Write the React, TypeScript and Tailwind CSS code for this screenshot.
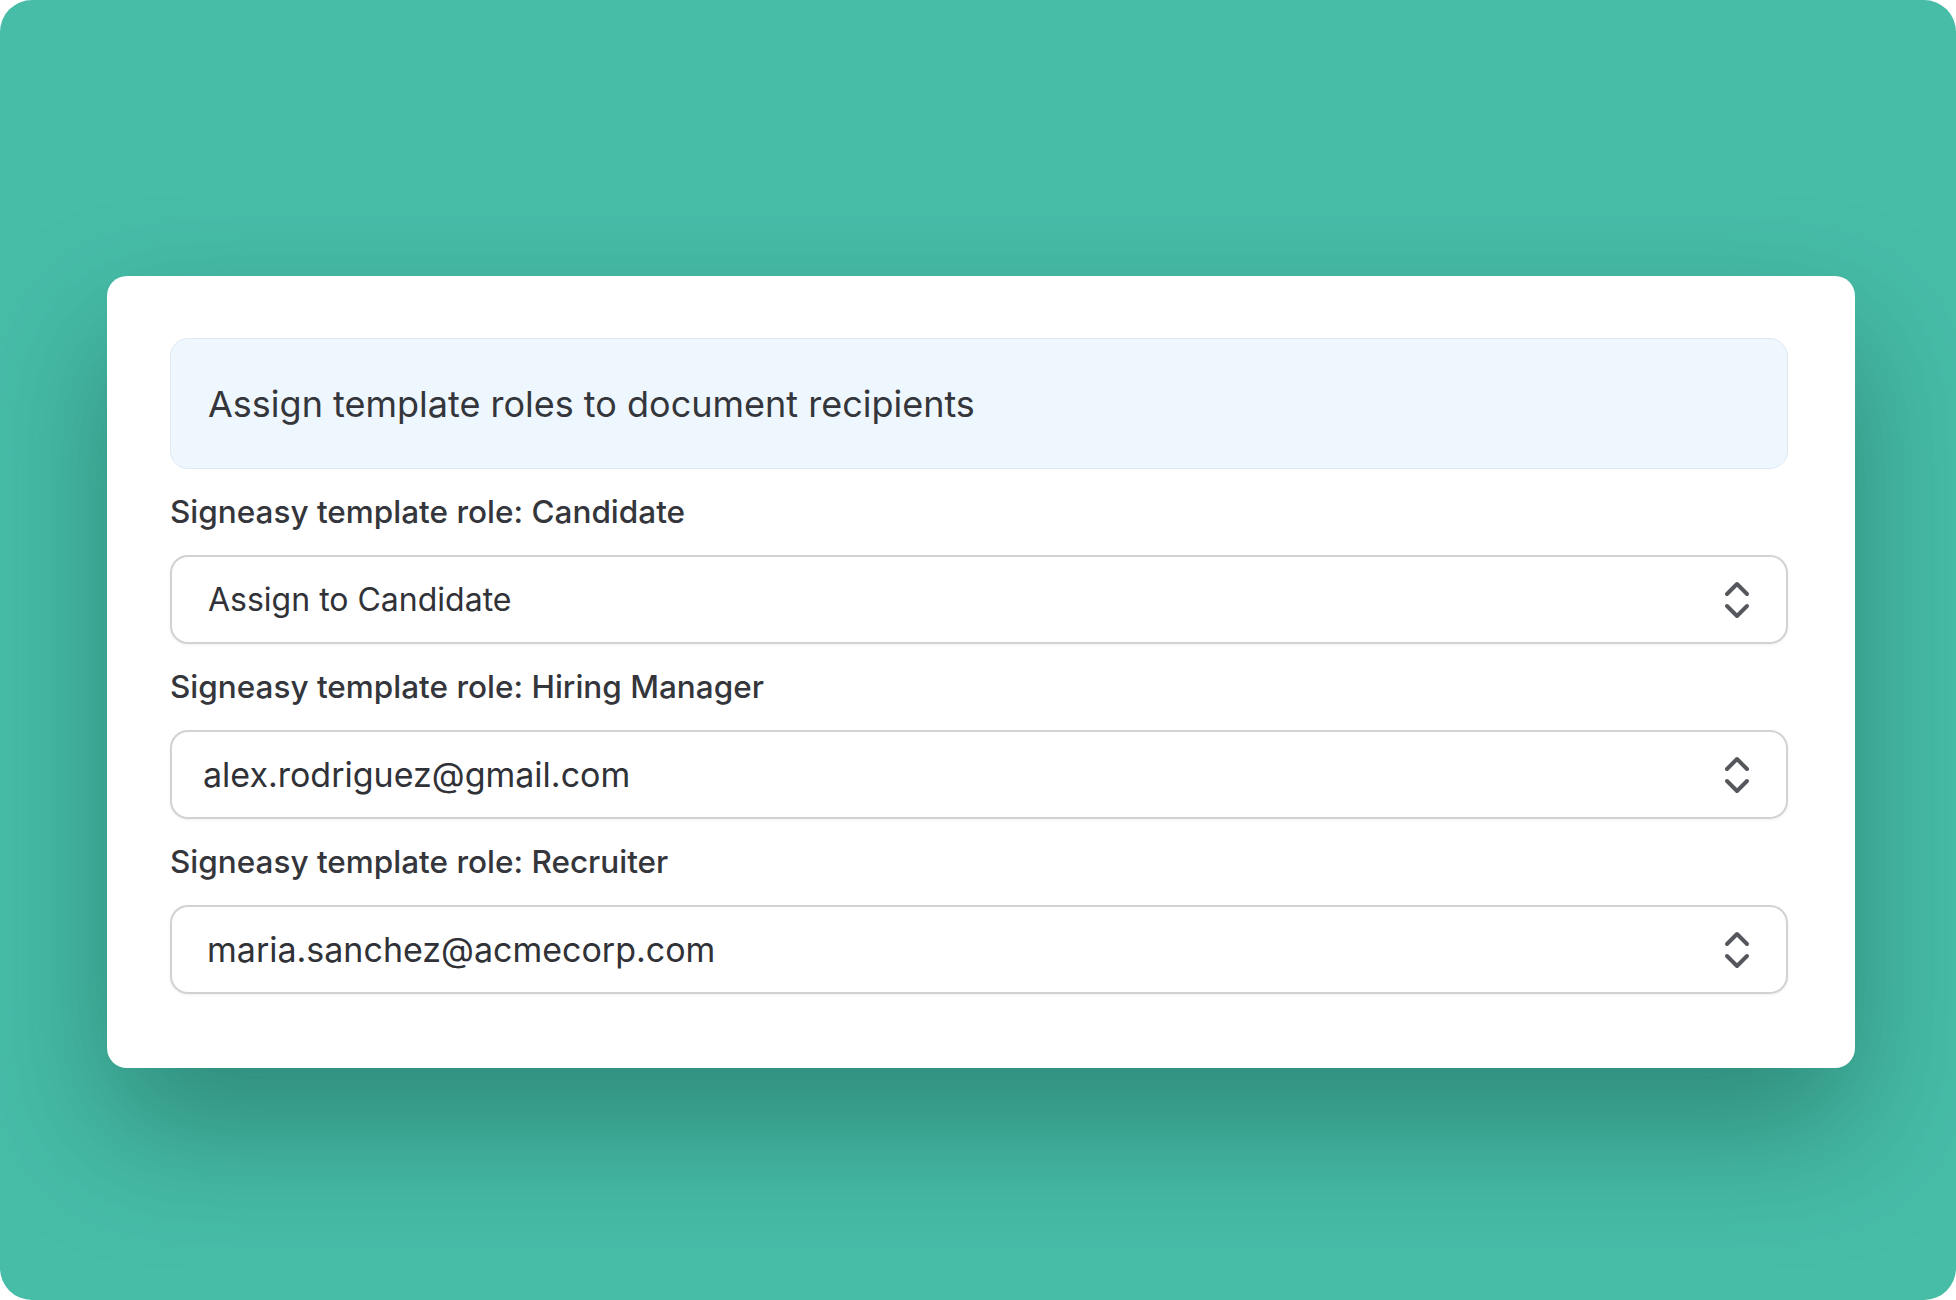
import { ChevronsUpDown } from "lucide-react";

const roles = [
  { role: "Candidate", value: "Assign to Candidate", text: "text-[32px] pl-[36px]" },
  { role: "Hiring Manager", value: "alex.rodriguez@gmail.com", text: "text-[34px] pl-[31px]" },
  { role: "Recruiter", value: "maria.sanchez@acmecorp.com", text: "text-[34px] pl-[35px]" },
];

function RoleSelect({ value, text }: { value: string; text: string }) {
  return (
    <div className="flex h-[89px] items-center justify-between rounded-[18px] border-2 border-[#d2d2d2] bg-white pr-[25px] shadow-[0_1px_3px_rgba(0,0,0,0.06)]">
      <span className={`${text} text-[#303237]`}>{value}</span>
      <ChevronsUpDown size={48} strokeWidth={2} className="text-[#55575c]" />
    </div>
  );
}

export default function App() {
  return (
    <div className="h-[1300px] w-full bg-white font-['Inter','Noto_Sans',sans-serif]">
      <div className="h-full overflow-hidden rounded-[32px] bg-[#47bda8] pl-[107px] pt-[276px]">
        <div className="flex w-[1748px] flex-col gap-6 rounded-[20px] bg-white pb-[74px] pl-[63px] pr-[67px] pt-[62px] shadow-[0_60px_130px_rgba(10,60,50,0.4)]">
          <div className="flex h-[131px] items-center rounded-[18px] border border-[#dfe9f3] bg-[#eff7fe] px-[37px]">
            <h1 className="text-[36px] text-[#34363b]">
              Assign template roles to document recipients
            </h1>
          </div>
          {roles.map((r) => (
            <div key={r.role} className="flex flex-col gap-6">
              <p className="text-[31.5px] font-medium leading-[38px] text-[#34363b]">
                Signeasy template role: {r.role}
              </p>
              <RoleSelect value={r.value} text={r.text} />
            </div>
          ))}
        </div>
      </div>
    </div>
  );
}
